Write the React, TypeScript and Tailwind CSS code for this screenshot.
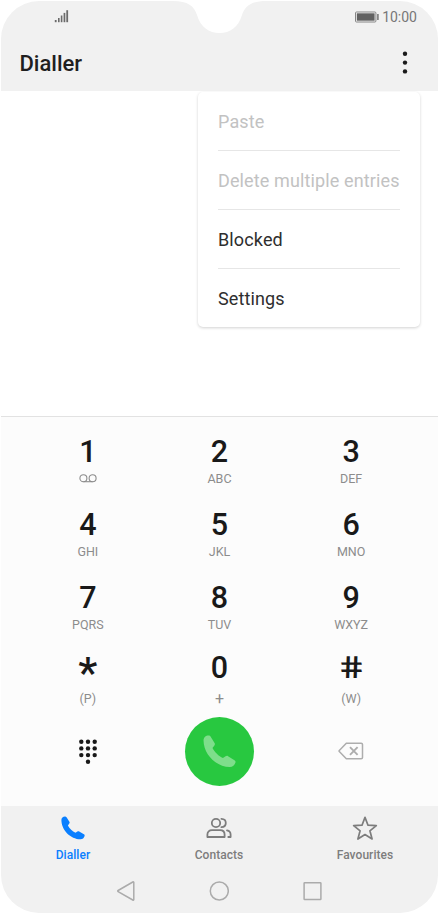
const phonePath =
  'M.4 4C.4 1.8 2 .4 4 .4c.8 0 1.3.3 1.7 1l2.7 4.4c.4.7.3 1.2-.1 1.8L6.9 9.4c1.5 2.9 4.6 6 7.6 7.4l1.9-1.3c.6-.4 1.2-.5 1.8-.1l4.7 2.9c.7.4.9.9.7 1.7-.5 2-2.1 3.3-4.1 3.3C9.6 23.3.4 14 .4 4z'

const menuItems = [
  { label: 'Paste', disabled: true },
  { label: 'Delete multiple entries', disabled: true },
  { label: 'Blocked', disabled: false },
  { label: 'Settings', disabled: false },
]

const keyRows = [
  {
    height: 'h-[73px]',
    keys: [
      { digit: '1', letters: '' },
      { digit: '2', letters: 'ABC' },
      { digit: '3', letters: 'DEF' },
    ],
  },
  {
    height: 'h-[73px]',
    keys: [
      { digit: '4', letters: 'GHI' },
      { digit: '5', letters: 'JKL' },
      { digit: '6', letters: 'MNO' },
    ],
  },
  {
    height: 'h-[70px]',
    keys: [
      { digit: '7', letters: 'PQRS' },
      { digit: '8', letters: 'TUV' },
      { digit: '9', letters: 'WXYZ' },
    ],
  },
]

function PhoneIcon({ className }: { className: string }) {
  return (
    <svg className={className} viewBox="0 0 24 24" fill="currentColor">
      <path d={phonePath} />
    </svg>
  )
}

function VoicemailIcon() {
  return (
    <svg className="h-4 w-[18px]" viewBox="0 0 18 16" fill="none" stroke="#8c8c8c" strokeWidth="1.1">
      <circle cx="4.4" cy="7.2" r="3.5" />
      <circle cx="13.6" cy="7.2" r="3.5" />
      <path d="M4.4 10.7h9.2" />
    </svg>
  )
}

function StatusBar() {
  return (
    <div className="relative flex h-[31px] items-center justify-between pl-[53px] pr-[21px]">
      <svg className="mb-px h-[14px] w-[16px]" viewBox="0 0 16 14" fill="#6b6b6b">
        <rect x=".8" y="11" width="1.8" height="2.2" />
        <rect x="4" y="9" width="1.6" height="4.2" />
        <rect x="6.8" y="6.5" width="1.6" height="6.7" />
        <rect x="9.6" y="3.9" width="1.7" height="9.3" />
        <rect x="12.3" y="1.2" width="1.8" height="12" />
      </svg>
      <div className="flex items-center gap-[3px]">
        <svg className="h-[12px] w-[25px]" viewBox="0 0 25 12">
          <rect x="1.5" y="1" width="20.4" height="10" rx="1" fill="#fff" fillOpacity=".4" stroke="#858585" strokeWidth="1" />
          <rect x="2.8" y="2.3" width="17.8" height="7.4" fill="#616161" />
          <rect x="23.1" y="3" width="1.6" height="6" fill="#7a7a7a" />
        </svg>
        <span className="text-[14px] leading-4 text-[#777]">10:00</span>
      </div>
      {/* Camera notch */}
      <svg className="absolute left-[172px] top-0 h-[33px] w-[93px]" viewBox="0 0 93 33" fill="#fff">
        <path d="M0 0C15 0 21 5 24 14C27.5 26 36 32 46.5 32S65.5 26 69 14C72 5 78 0 93 0z" />
      </svg>
    </div>
  )
}

function OptionsMenu() {
  return (
    <div className="absolute right-[18px] top-px h-[235px] w-[222px] rounded-[5px] bg-white px-5 shadow-[0_1px_3px_rgba(0,0,0,0.18)]">
      {menuItems.map((item) => (
        <div
          key={item.label}
          className={`flex h-[59px] items-center border-b border-[#e6e6e6] text-[18px] tracking-[0.13px] whitespace-nowrap last:border-b-0 ${
            item.disabled ? 'text-[#c2c2c2]' : 'text-[#2e2e2e]'
          }`}
        >
          {item.label}
        </div>
      ))}
    </div>
  )
}

function Keypad() {
  return (
    <div className="h-[390px] shrink-0 border-t border-[#e2e2e2] bg-[#fcfcfc] px-[21px] pt-[19px] text-center">
      {keyRows.map((row) => (
        <div key={row.keys[0].digit} className={`grid grid-cols-3 ${row.height}`}>
          {row.keys.map((key) => (
            <div key={key.digit} className="flex flex-col items-center gap-[3px]">
              <span className="text-[30.5px] leading-8 font-medium text-[#191919]">{key.digit}</span>
              {key.letters ? (
                <span className="text-[12.5px] leading-4 text-[#8c8c8c]">{key.letters}</span>
              ) : (
                <VoicemailIcon />
              )}
            </div>
          ))}
        </div>
      ))}
      <div className="grid h-[65px] grid-cols-3 font-medium text-[#191919]">
        <div className="flex flex-col items-center gap-[7px]">
          <span className="relative top-1 h-8 text-[43px] leading-8">*</span>
          <span className="text-[12.5px] leading-4 font-normal text-[#8c8c8c]">(P)</span>
        </div>
        <div className="flex flex-col items-center gap-[7px]">
          <span className="text-[30.5px] leading-8">0</span>
          <span className="text-[16px] leading-4 font-normal text-[#8c8c8c]">+</span>
        </div>
        <div className="flex flex-col items-center gap-[7px]">
          <span className="h-8 scale-x-[1.3] skew-x-[9deg] text-[30.5px] leading-8">#</span>
          <span className="text-[12.5px] leading-4 font-normal text-[#8c8c8c]">(W)</span>
        </div>
      </div>
      {/* Keypad toggle, call and delete */}
      <div className="grid h-[69px] grid-cols-3 items-center justify-items-center">
        <svg className="h-[26px] w-[18px]" viewBox="0 0 18 26" fill="#191919">
          {[2.3, 9, 15.7].map((x) =>
            [2.7, 9.4, 16.1].map((y) => <circle key={`${x}-${y}`} cx={x} cy={y} r="2.2" />)
          )}
          <circle cx="9" cy="22.8" r="2.2" />
        </svg>
        <div className="flex h-[69px] w-[69px] items-center justify-center rounded-full bg-[#28c840]">
          <PhoneIcon className="h-[33px] w-[33px] text-[#7ede8b]" />
        </div>
        <svg className="mb-px h-[18px] w-[26px]" viewBox="0 0 26 18" fill="none" stroke="#adadad" strokeWidth="1.5" strokeLinejoin="round">
          <path d="M8.3 1.2H23.2C24 1.2 24.5 1.7 24.5 2.4V15.6C24.5 16.3 24 16.8 23.2 16.8H8.3L1.3 9.6C1 9.2 1 8.8 1.3 8.4z" />
          <path d="M12 5.2l7.6 7.6M19.6 5.2L12 12.8" strokeWidth="1.9" />
        </svg>
      </div>
    </div>
  )
}

function TabBar() {
  return (
    <div className="-ml-px grid h-[61px] w-[438px] grid-cols-3 pt-[10px] text-[12px] font-medium tracking-[0.06px] text-[#7d7d7d]">
      <div className="flex flex-col items-center gap-[7px] text-[#0a7fff]">
        <PhoneIcon className="h-6 w-6" />
        <span className="leading-4">Dialler</span>
      </div>
      <div className="flex flex-col items-center gap-[7px]">
        <svg className="h-6 w-[26px]" viewBox="0 0 26 24" fill="none" stroke="currentColor" strokeWidth="1.8" strokeLinejoin="round" strokeLinecap="round">
          <circle cx="10" cy="7" r="4.2" />
          <path d="M1.4 21v-2.4c0-2.8 1.8-4.4 4.6-4.4h8c2.8 0 4.6 1.6 4.6 4.4V21z" />
          <path d="M15.4 2.9c2.7.1 4.4 1.8 4.4 4.1s-1.7 4-4.4 4.2M21 14.3c2.2.4 3.6 2 3.6 4.3V21h-2.3" />
        </svg>
        <span className="leading-4">Contacts</span>
      </div>
      <div className="flex flex-col items-center gap-[7px]">
        <svg className="h-6 w-[26px]" viewBox="0 0 26 24" fill="none" stroke="currentColor" strokeWidth="1.7" strokeLinejoin="round">
          <path d="M13 1.4l3 7.8 8.3.4-6.4 5.2 2.2 8.2-7.1-4.5L5.9 23l2.2-8.2L1.7 9.6l8.3-.4z" />
        </svg>
        <span className="leading-4">Favourites</span>
      </div>
    </div>
  )
}

function NavigationBar() {
  return (
    <div className="-ml-px flex h-[46px] items-start justify-center gap-[73px] pt-[14px]">
      <svg className="h-5 w-5" viewBox="0 0 20 20" fill="none" stroke="#ababab" strokeWidth="1.5" strokeLinejoin="round">
        <path d="M17.8 1.6v16.8c0 .6-.5.9-1 .6L2.1 10.6c-.5-.3-.5-.8 0-1.1L16.8 1c.5-.3 1 0 1 .6z" />
      </svg>
      <svg className="h-5 w-5" viewBox="0 0 20 20" fill="none" stroke="#ababab" strokeWidth="1.5">
        <circle cx="10.3" cy="10" r="9" />
      </svg>
      <svg className="h-5 w-5" viewBox="0 0 20 20" fill="none" stroke="#ababab" strokeWidth="1.5">
        <rect x="2.1" y="1.7" width="16.8" height="16.8" rx=".6" />
      </svg>
    </div>
  )
}

export default function App() {
  return (
    <div className="h-[914px] w-[439px] bg-white p-px font-[Roboto,sans-serif]">
      <div className="flex h-[912px] w-[437px] flex-col overflow-hidden rounded-[38px] bg-white">
        {/* Header */}
        <div className="h-[90px] shrink-0 bg-[#f1f1f1]">
          <StatusBar />
          <div className="flex h-[61px] items-center justify-between pl-[18.5px] pr-[30px]">
            <h1 className="pt-[2px] text-[22px] font-medium text-[#1f1f1f]">Dialler</h1>
            <svg className="h-6 w-[6px]" viewBox="0 0 6 24" fill="#1a1a1a">
              <circle cx="3" cy="2.8" r="2.2" />
              <circle cx="3" cy="11.6" r="2.2" />
              <circle cx="3" cy="20.4" r="2.2" />
            </svg>
          </div>
        </div>

        {/* Call log */}
        <div className="relative h-[325px] shrink-0 bg-white">
          <OptionsMenu />
        </div>

        <Keypad />

        {/* Footer */}
        <div className="h-[107px] shrink-0 bg-[#f1f1f1]">
          <TabBar />
          <NavigationBar />
        </div>
      </div>
    </div>
  )
}
